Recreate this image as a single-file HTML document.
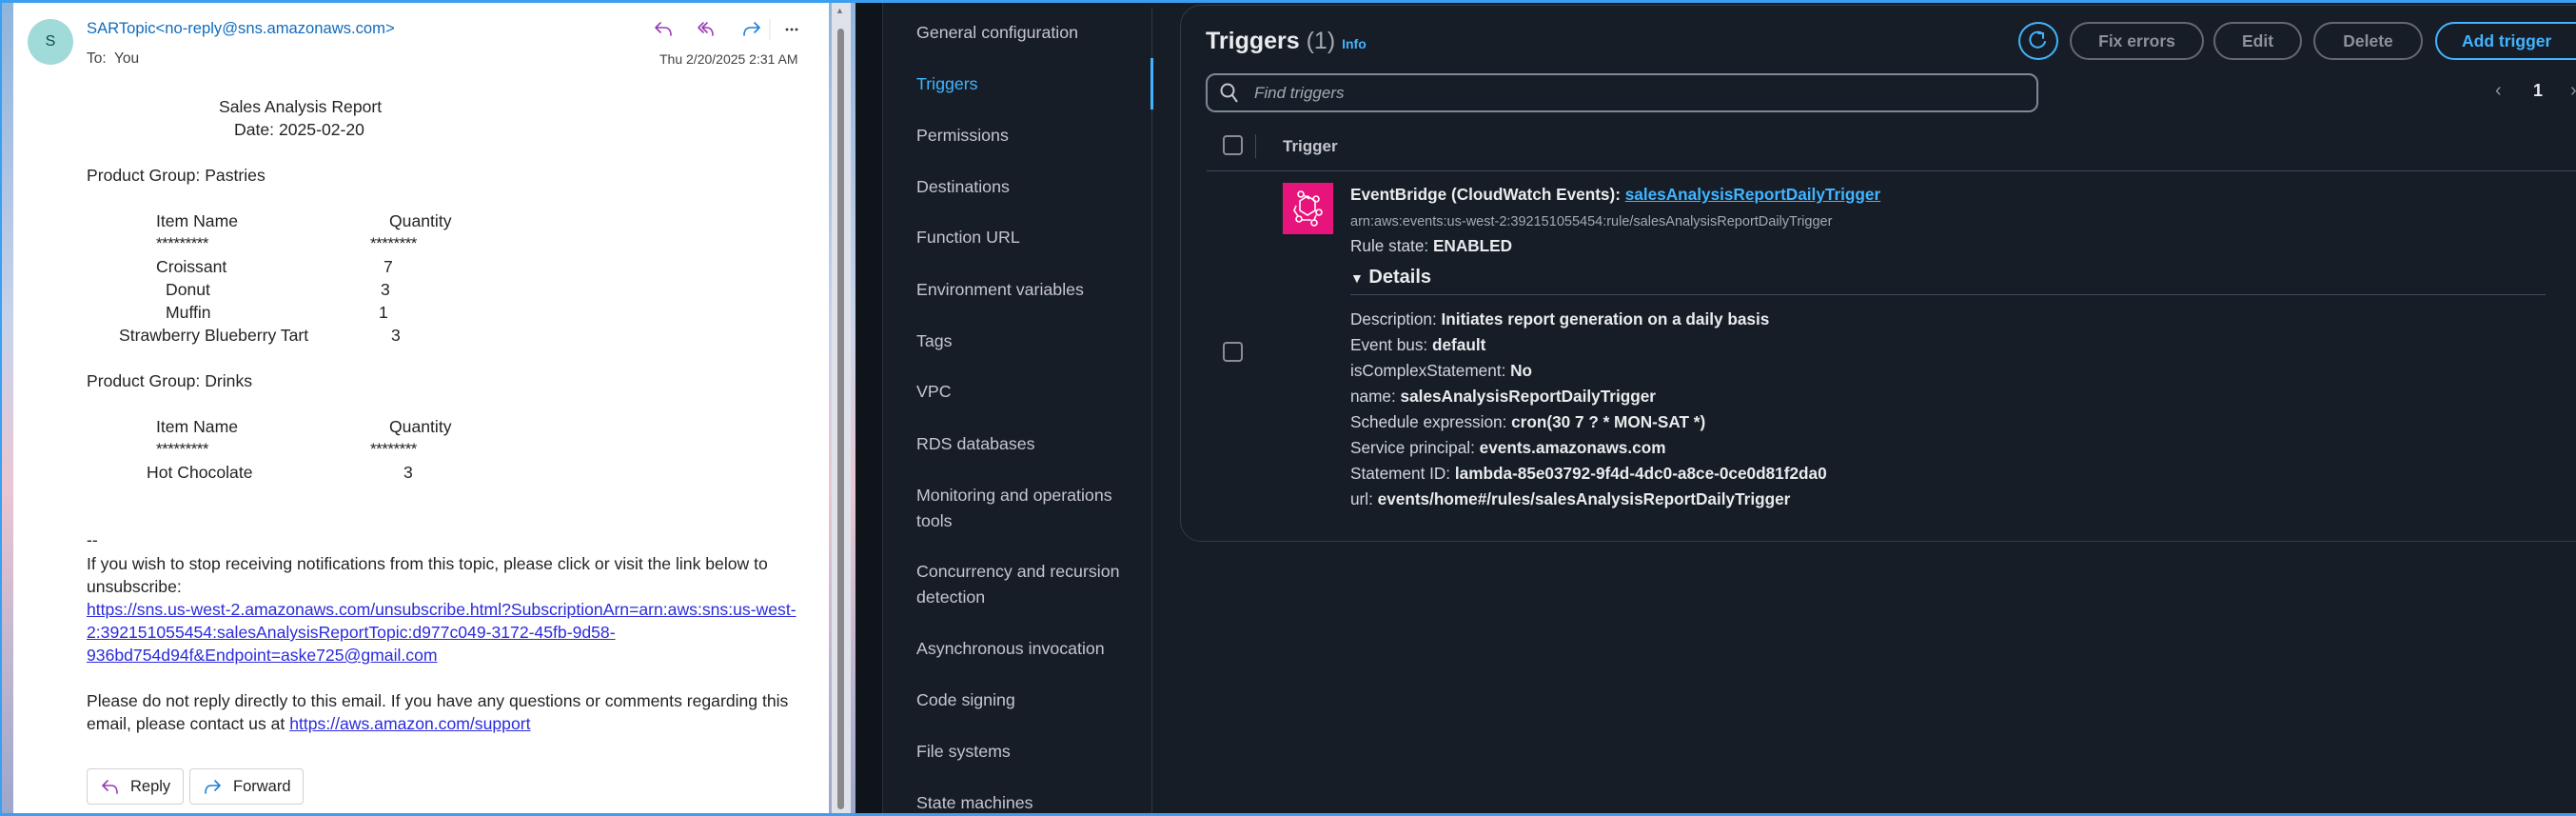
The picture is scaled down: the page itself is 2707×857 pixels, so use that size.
<!DOCTYPE html>
<html><head><meta charset="utf-8"><style>
*{margin:0;padding:0;box-sizing:border-box}
body{width:2707px;height:857px;overflow:hidden;position:relative;background:#161d26;font-family:"Liberation Sans",Arial,sans-serif}
.a{position:absolute;white-space:nowrap}
#bgl{position:absolute;left:0;top:0;width:900px;height:857px;background:linear-gradient(180deg,#8fb4dc 0%,#c8d3ea 40%,#e9c6d2 60%,#9aa7cc 100%)}
#mail{position:absolute;left:14px;top:3px;width:857px;height:851px;background:#fff}
.m{position:absolute;white-space:nowrap;color:#242424;font-size:17.6px;line-height:24px}
.s{font-size:17px;letter-spacing:-0.5px}
.lk{color:#2b2bdc;text-decoration:underline}
.btn{position:absolute;border:1px solid #d1d1d1;border-radius:4px;background:#fff;height:38px;font-size:16.5px;color:#242424;line-height:36px}
.nav{position:absolute;left:963px;color:#c6c6cd;font-size:17.8px;line-height:27px;white-space:nowrap}
.t{position:absolute;left:1419px;color:#d1d5db;font-size:17.2px;line-height:24px;white-space:nowrap}
.t b{color:#e9ebed}
.pb{position:absolute;top:23px;height:40px;border:2px solid #656871;border-radius:20px;color:#8d9199;font-weight:bold;font-size:17.5px;line-height:36px;text-align:center}
.cb{position:absolute;width:21px;height:21px;border:2px solid #8c8c94;border-radius:4px}
</style></head><body>
<div id="bgl"></div>
<div style="position:absolute;left:0;top:0;width:2707px;height:3px;background:#3a9ff0"></div>
<div style="position:absolute;left:0;top:854px;width:2707px;height:3px;background:#3a9ff0"></div>
<div style="position:absolute;left:0;top:0;width:2px;height:857px;background:#3a9ff0"></div>
<div id="mail"></div>
<div style="position:absolute;left:874px;top:3px;width:20px;height:851px;background:#dfe2ea"></div>
<div style="position:absolute;left:880px;top:30px;width:7px;height:820px;border-radius:4px;background:#8a8a8a"></div>
<div class="a" style="left:878px;top:6px;font-size:9px;color:#777">▲</div>

<div style="position:absolute;left:29px;top:20px;width:48px;height:48px;border-radius:50%;background:#a1dbd9;color:#0d4b4b;font-size:16px;text-align:center;line-height:48px">S</div>
<div class="m" style="left:91px;top:18px;color:#0f6cbd;font-size:16.6px">SARTopic&lt;no-reply@sns.amazonaws.com&gt;</div>
<div class="m" style="left:91px;top:50px;color:#424242;font-size:15.5px">To:&nbsp; You</div>
<div class="m" style="left:693px;top:50px;color:#424242;font-size:14px">Thu 2/20/2025 2:31 AM</div>
<svg class="a" style="left:688px;top:20px" width="160" height="22" viewBox="0 0 160 22" fill="none" stroke-width="1.6" stroke-linecap="round" stroke-linejoin="round">
<path d="M6 4 L1 9 L6 14 M1 9 H10 Q17 9 17 17" stroke="#9a3ab5"/>
<path d="M51 4 L46 9 L51 14 M55 4 L50 9 L55 14 M50 9 H54 Q61 9 61 17" stroke="#9a3ab5"/>
<path d="M105 4 L110 9 L105 14 M110 9 H101 Q94 9 94 17" stroke="#1b7fd8"/>
<path d="M121 0 V22" stroke="#e0e0e0" stroke-width="1"/>
<circle cx="139" cy="11" r="1.4" fill="#333" stroke="none"/><circle cx="144" cy="11" r="1.4" fill="#333" stroke="none"/><circle cx="149" cy="11" r="1.4" fill="#333" stroke="none"/>
</svg>

<div class="m" style="left:230px;top:100px">Sales Analysis Report</div>
<div class="m" style="left:246px;top:124px">Date: 2025-02-20</div>
<div class="m" style="left:91px;top:172px">Product Group: Pastries</div>
<div class="m" style="left:164px;top:220px">Item Name</div><div class="m" style="left:409px;top:220px">Quantity</div>
<div class="m s" style="left:164px;top:244px">*********</div><div class="m s" style="left:389px;top:244px">********</div>
<div class="m" style="left:164px;top:268px">Croissant</div><div class="m" style="left:403px;top:268px">7</div>
<div class="m" style="left:174px;top:292px">Donut</div><div class="m" style="left:400px;top:292px">3</div>
<div class="m" style="left:174px;top:316px">Muffin</div><div class="m" style="left:398px;top:316px">1</div>
<div class="m" style="left:125px;top:340px">Strawberry Blueberry Tart</div><div class="m" style="left:411px;top:340px">3</div>
<div class="m" style="left:91px;top:388px">Product Group: Drinks</div>
<div class="m" style="left:164px;top:436px">Item Name</div><div class="m" style="left:409px;top:436px">Quantity</div>
<div class="m s" style="left:164px;top:460px">*********</div><div class="m s" style="left:389px;top:460px">********</div>
<div class="m" style="left:154px;top:484px">Hot Chocolate</div><div class="m" style="left:424px;top:484px">3</div>
<div class="m" style="left:91px;top:555px">--</div>
<div class="m" style="left:91px;top:580px">If you wish to stop receiving notifications from this topic, please click or visit the link below to</div>
<div class="m" style="left:91px;top:604px">unsubscribe:</div>
<div class="m lk" style="left:91px;top:628px">https://sns.us-west-2.amazonaws.com/unsubscribe.html?SubscriptionArn=arn:aws:sns:us-west-</div>
<div class="m lk" style="left:91px;top:652px">2:392151055454:salesAnalysisReportTopic:d977c049-3172-45fb-9d58-</div>
<div class="m lk" style="left:91px;top:676px">936bd754d94f&amp;Endpoint=aske725@gmail.com</div>
<div class="m" style="left:91px;top:724px">Please do not reply directly to this email. If you have any questions or comments regarding this</div>
<div class="m" style="left:91px;top:748px">email, please contact us at <span class="lk">https://aws.amazon.com/support</span></div>
<div class="btn" style="left:91px;top:807px;width:102px"><svg class="a" style="left:15px;top:10px" width="18" height="16" fill="none" stroke="#9a3ab5" stroke-width="1.6" stroke-linecap="round"><path d="M6 2 L1 7 L6 12 M1 7 H10 Q16 7 16 15"/></svg><span class="a" style="left:45px">Reply</span></div>
<div class="btn" style="left:199px;top:807px;width:120px"><svg class="a" style="left:14px;top:10px" width="18" height="16" fill="none" stroke="#1b7fd8" stroke-width="1.6" stroke-linecap="round"><path d="M12 2 L17 7 L12 12 M17 7 H8 Q2 7 2 15"/></svg><span class="a" style="left:45px">Forward</span></div>

<div style="position:absolute;left:899px;top:3px;width:28px;height:851px;background:#0f141a"></div>
<div style="position:absolute;left:927px;top:3px;width:1px;height:851px;background:#2a323c"></div>
<div style="position:absolute;left:1210px;top:8px;width:1px;height:846px;background:#2f3842"></div>
<div style="position:absolute;left:1209px;top:61px;width:3px;height:54px;background:#42b4ff"></div>
<div class="nav" style="top:21px">General configuration</div>
<div class="nav" style="top:75px;color:#42b4ff">Triggers</div>
<div class="nav" style="top:129px">Permissions</div>
<div class="nav" style="top:183px">Destinations</div>
<div class="nav" style="top:236px">Function URL</div>
<div class="nav" style="top:291px">Environment variables</div>
<div class="nav" style="top:345px">Tags</div>
<div class="nav" style="top:398px">VPC</div>
<div class="nav" style="top:453px">RDS databases</div>
<div class="nav" style="top:507px">Monitoring and operations<br>tools</div>
<div class="nav" style="top:587px">Concurrency and recursion<br>detection</div>
<div class="nav" style="top:668px">Asynchronous invocation</div>
<div class="nav" style="top:722px">Code signing</div>
<div class="nav" style="top:776px">File systems</div>
<div class="nav" style="top:830px">State machines</div>

<div style="position:absolute;left:1240px;top:5px;width:1500px;height:564px;border:1px solid #333b45;border-radius:22px"></div>
<div class="a" style="left:1267px;top:27px;font-size:25px;font-weight:bold;color:#e9ebed;line-height:32px">Triggers <span style="font-weight:normal;color:#a3a9b1">(1)</span> <span style="font-size:14px;color:#42b4ff">Info</span></div>
<div style="position:absolute;left:1267px;top:77px;width:875px;height:41px;border:2px solid #7d8998;border-radius:10px"></div>
<svg class="a" style="left:1282px;top:87px" width="20" height="22" fill="none" stroke="#c6c6cd" stroke-width="2"><circle cx="8" cy="8" r="6.5"/><path d="M13 13 L18 20"/></svg>
<div class="a" style="left:1318px;top:86px;font-size:17px;font-style:italic;color:#a3a9b1;line-height:24px">Find triggers</div>

<div style="position:absolute;left:2121px;top:23px;width:42px;height:40px;border:2px solid #42b4ff;border-radius:50%"></div>
<svg class="a" style="left:2131px;top:32px" width="22" height="22" fill="none" stroke="#42b4ff" stroke-width="2" stroke-linecap="round"><path d="M16 4 A8 8 0 1 0 18 12"/><path d="M11 3 H16 V8"/></svg>
<div class="pb" style="left:2175px;width:141px">Fix errors</div>
<div class="pb" style="left:2326px;width:93px">Edit</div>
<div class="pb" style="left:2431px;width:115px">Delete</div>
<div class="pb" style="left:2559px;width:170px;border-color:#42b4ff;color:#42b4ff;text-align:left;padding-left:26px">Add trigger</div>
<div class="a" style="left:2622px;top:84px;font-size:20px;color:#8d9199">&#x2039;</div>
<div class="a" style="left:2662px;top:85px;font-size:18px;font-weight:bold;color:#e9ebed">1</div>
<div class="a" style="left:2701px;top:84px;font-size:20px;color:#8d9199">&#x203A;</div>

<div class="cb" style="left:1285px;top:142px"></div>
<div style="position:absolute;left:1319px;top:141px;width:1px;height:25px;background:#414d5c"></div>
<div class="a" style="left:1348px;top:142px;font-size:17px;font-weight:bold;color:#c6c6cd;line-height:24px">Trigger</div>
<div style="position:absolute;left:1268px;top:179px;width:1440px;height:1px;background:#414d5c"></div>

<div style="position:absolute;left:1348px;top:192px;width:53px;height:54px;background:#e7157b"></div>
<svg class="a" style="left:1348px;top:192px" width="53" height="54" fill="none" stroke="#fff" stroke-width="1.6">
<path d="M26 14 L34 19 L34 29 L26 34 L18 29 L18 19 Z"/>
<circle cx="19" cy="12" r="3"/><circle cx="35" cy="17" r="3"/><circle cx="38" cy="31" r="3"/><circle cx="17" cy="38" r="3"/><circle cx="33" cy="42" r="3"/><path d="M22 13 L28 17 M14 24 L12 29 L16 35 M35 34 L33 39 M20 39 H30"/>
</svg>
<div class="t" style="top:192px;font-weight:bold;color:#e9ebed">EventBridge (CloudWatch Events): <span style="color:#42b4ff;text-decoration:underline">salesAnalysisReportDailyTrigger</span></div>
<div class="t" style="top:221px;font-size:14.5px;color:#a3a9b1">arn:aws:events:us-west-2:392151055454:rule/salesAnalysisReportDailyTrigger</div>
<div class="t" style="top:246px">Rule state: <b>ENABLED</b></div>
<div class="t" style="top:278px;font-size:20px;font-weight:bold;color:#e9ebed;line-height:26px"><span style="font-size:14px">▼</span> Details</div>
<div style="position:absolute;left:1419px;top:309px;width:1256px;height:1px;background:#414d5c"></div>
<div class="t" style="top:323px">Description: <b>Initiates report generation on a daily basis</b></div>
<div class="t" style="top:350px">Event bus: <b>default</b></div>
<div class="t" style="top:377px">isComplexStatement: <b>No</b></div>
<div class="t" style="top:404px">name: <b>salesAnalysisReportDailyTrigger</b></div>
<div class="t" style="top:431px">Schedule expression: <b>cron(30 7 ? * MON-SAT *)</b></div>
<div class="t" style="top:458px">Service principal: <b>events.amazonaws.com</b></div>
<div class="t" style="top:485px">Statement ID: <b>lambda-85e03792-9f4d-4dc0-a8ce-0ce0d81f2da0</b></div>
<div class="t" style="top:512px">url: <b>events/home#/rules/salesAnalysisReportDailyTrigger</b></div>
<div class="cb" style="left:1285px;top:359px"></div>
</body></html>
